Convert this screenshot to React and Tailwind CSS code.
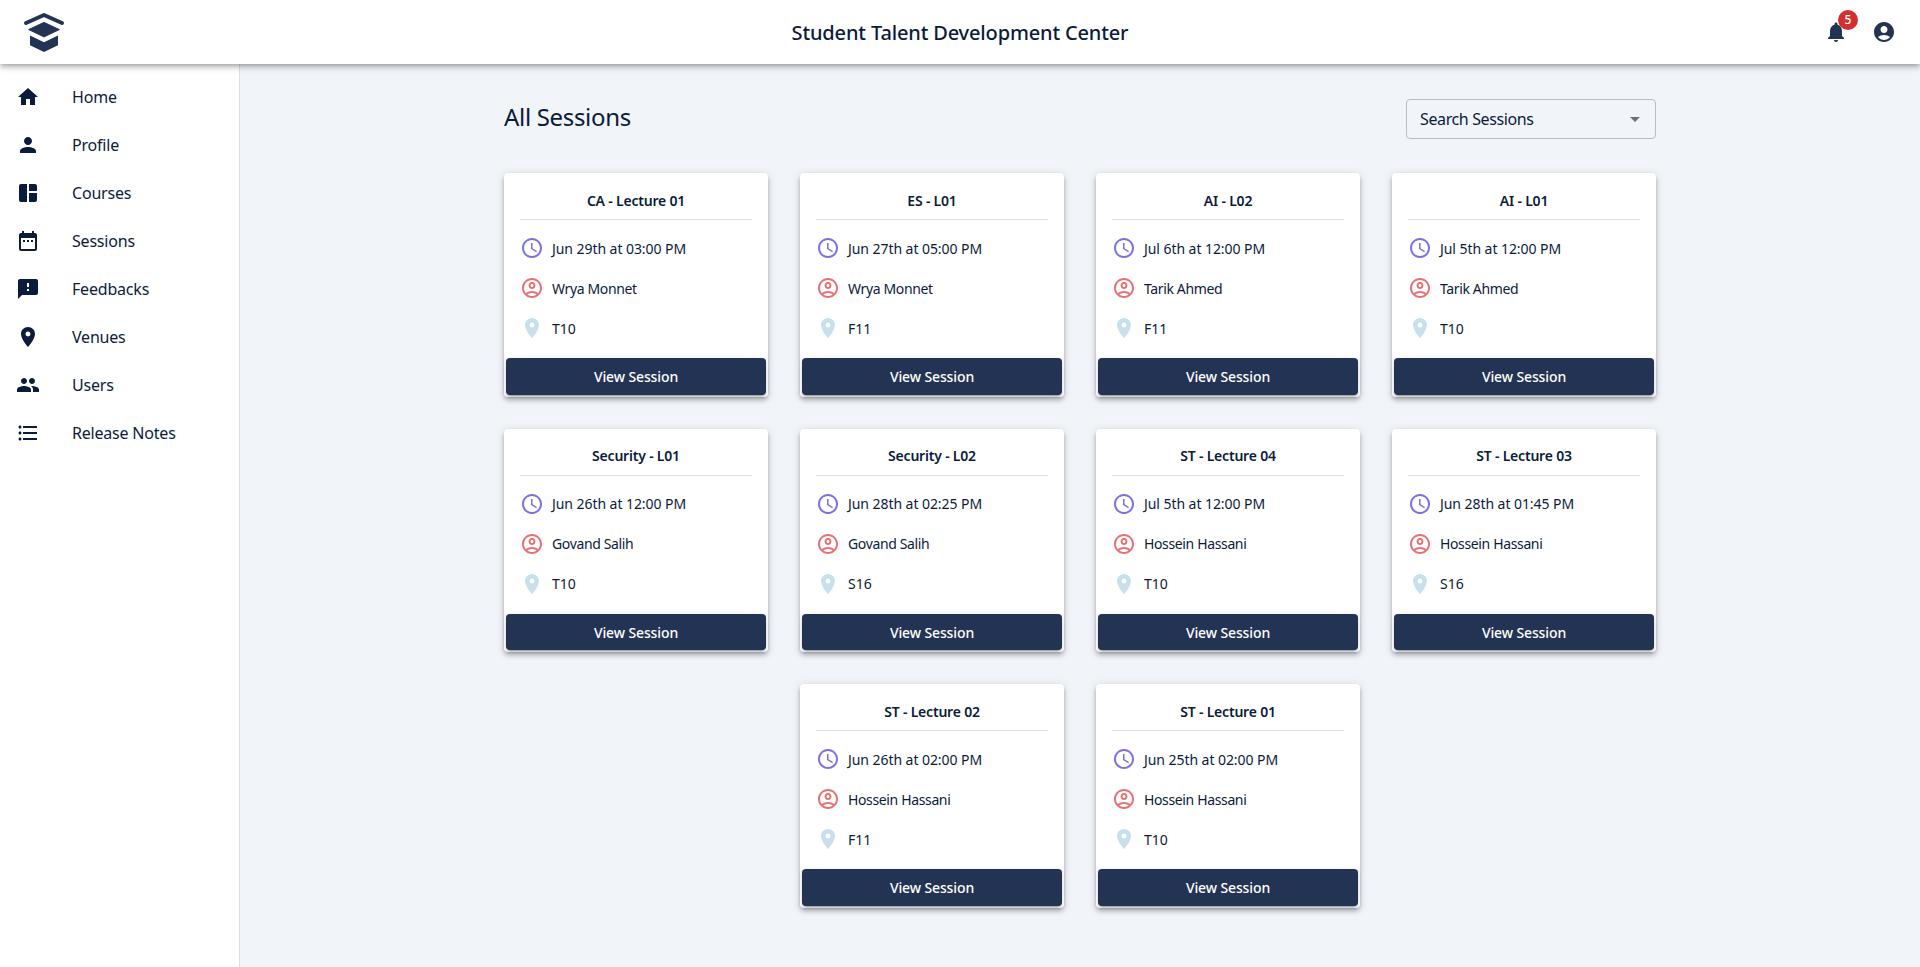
import React from "react";
import {
  MdHome, MdPerson, MdSpaceDashboard, MdDateRange, MdFeedback, MdLocationOn, MdPeople,
  MdFormatListBulleted, MdNotifications, MdAccountCircle, MdAccessTime, MdArrowDropDown,
} from "react-icons/md";

const nav = [
  ["Home", MdHome],
  ["Profile", MdPerson],
  ["Courses", MdSpaceDashboard],
  ["Sessions", MdDateRange],
  ["Feedbacks", MdFeedback],
  ["Venues", MdLocationOn],
  ["Users", MdPeople],
  ["Release Notes", MdFormatListBulleted],
];

const sessions = [
  ["CA - Lecture 01", "Jun 29th at 03:00 PM", "Wrya Monnet", "T10"],
  ["ES - L01", "Jun 27th at 05:00 PM", "Wrya Monnet", "F11"],
  ["AI - L02", "Jul 6th at 12:00 PM", "Tarik Ahmed", "F11"],
  ["AI - L01", "Jul 5th at 12:00 PM", "Tarik Ahmed", "T10"],
  ["Security - L01", "Jun 26th at 12:00 PM", "Govand Salih", "T10"],
  ["Security - L02", "Jun 28th at 02:25 PM", "Govand Salih", "S16"],
  ["ST - Lecture 04", "Jul 5th at 12:00 PM", "Hossein Hassani", "T10"],
  ["ST - Lecture 03", "Jun 28th at 01:45 PM", "Hossein Hassani", "S16"],
  ["ST - Lecture 02", "Jun 26th at 02:00 PM", "Hossein Hassani", "F11"],
  ["ST - Lecture 01", "Jun 25th at 02:00 PM", "Hossein Hassani", "T10"],
];

function Logo() {
  return (
    <svg viewBox="0 0 40 40" className="h-10 w-10 overflow-visible text-[#233353]" fill="currentColor">
      <path d="M2 11 20 3l18 8" fill="none" stroke="currentColor" strokeWidth="4" strokeLinecap="round" strokeLinejoin="round" />
      <path d="M4.500 17.600 20 10.300l15.500 7.300L20 25z" stroke="currentColor" strokeWidth=".8" strokeLinejoin="round" />
      <path d="M6 23.600l14 6.600 14-6.600v9.600L20 40 6 33.200z" />
    </svg>
  );
}

function PersonCircle() {
  return (
    <svg viewBox="0 0 24 24" className="h-6 w-6 text-[#e57373]" fill="currentColor">
      <path d="M12 2C6.480 2 2 6.480 2 12s4.480 10 10 10 10-4.480 10-10S17.520 2 12 2zM7.350 18.500C8.660 17.560 10.260 17 12 17s3.340.560 4.650 1.500C15.340 19.440 13.740 20 12 20s-3.340-.560-4.650-1.500zm10.790-1.380C16.450 15.800 14.320 15 12 15s-4.450.800-6.140 2.120C4.700 15.730 4 13.950 4 12c0-4.420 3.580-8 8-8s8 3.580 8 8c0 1.950-.700 3.730-1.860 5.120z" />
      <path d="M12 6c-1.930 0-3.500 1.570-3.500 3.500S10.070 13 12 13s3.500-1.570 3.500-3.500S13.930 6 12 6zm0 5c-.830 0-1.500-.670-1.500-1.500S11.170 8 12 8s1.500.670 1.500 1.500S12.830 11 12 11z" />
    </svg>
  );
}

function SessionCard({ title, time, lecturer, venue }) {
  return (
    <article className="flex h-[223.5px] w-[264px] flex-col rounded bg-white shadow-[0_2px_4px_-1px_rgba(0,0,0,0.2),0_4px_5px_0_rgba(0,0,0,0.14),0_1px_10px_0_rgba(0,0,0,0.12)]">
      <h2 className="mx-4 flex h-[47px] items-end justify-center border-b border-[#dedfe1] pb-[7.25px] text-sm leading-[22px] font-semibold tracking-[-0.2px]">
        {title}
      </h2>
      <div className="flex flex-col gap-4 px-4 pt-4 text-sm">
        <div className="flex h-6 items-center gap-2">
          <MdAccessTime className="h-6 w-6 text-[#7b70e8]" />
          <span className="pt-[1.5px] tracking-[-0.06px]">{time}</span>
        </div>
        <div className="flex h-6 items-center gap-2">
          <PersonCircle />
          <span className="pt-[1.5px] tracking-[-0.36px]">{lecturer}</span>
        </div>
        <div className="flex h-6 items-center gap-2">
          <MdLocationOn className="h-6 w-6 text-[#c8dff0]" />
          <span className="pt-[1.5px]">{venue}</span>
        </div>
      </div>
      <button className="mx-0.5 mt-auto mb-0.5 h-[36.5px] rounded bg-[#233353] pt-[1.5px] text-sm font-medium tracking-[-0.12px] text-white shadow-[0_3px_1px_-2px_rgba(0,0,0,0.2),0_2px_2px_0_rgba(0,0,0,0.14),0_1px_5px_0_rgba(0,0,0,0.12)]">
        View Session
      </button>
    </article>
  );
}

export default function App() {
  return (
    <div className="flex h-[967px] w-full flex-col overflow-hidden bg-[#f1f5fa] font-['Noto_Sans',sans-serif] text-[#0b1b3b]">
      <header className="relative z-10 grid h-16 shrink-0 grid-cols-3 items-center bg-white px-6 shadow-[0_2px_4px_-1px_rgba(0,0,0,0.2),0_4px_5px_0_rgba(0,0,0,0.14),0_1px_10px_0_rgba(0,0,0,0.12)]">
        <Logo />
        <h1 className="pt-0.5 text-center text-xl font-medium tracking-[-0.15px] whitespace-nowrap">Student Talent Development Center</h1>
        <div className="flex items-center justify-end gap-6 text-[#233353]">
          <div className="relative">
            <MdNotifications className="h-6 w-6" />
            <span className="absolute -top-2.5 left-3.5 flex h-5 w-5 items-center justify-center rounded-full bg-[#d32f2f] text-xs font-medium text-white">5</span>
          </div>
          <MdAccountCircle className="h-6 w-6" />
        </div>
      </header>
      <div className="flex min-h-0 flex-1">
        <nav className="w-60 shrink-0 border-r border-[#dedfe1] bg-white pt-[9px]">
          {nav.map(([label, Icon]) => (
            <a key={label} className="flex h-12 items-center gap-8 pl-4">
              <Icon className="h-6 w-6" />
              <span className="text-base tracking-[-0.2px]">{label}</span>
            </a>
          ))}
        </nav>
        <main className="flex flex-1 flex-col items-center pt-[35px]">
          <div className="flex h-10 w-[1152px] items-center justify-between">
            <h2 className="pb-[5px] text-2xl tracking-[-0.32px]">All Sessions</h2>
            <div className="flex h-10 w-[250px] items-center justify-between rounded border border-[#b9bdc1] pr-2 pl-[13px]">
              <span className="text-base tracking-[-0.38px]">Search Sessions</span>
              <MdArrowDropDown className="h-6 w-6 text-[#6e7073]" />
            </div>
          </div>
          <section className="mt-[34px] flex w-[1152px] flex-wrap justify-center gap-8">
            {sessions.map(([title, time, lecturer, venue]) => (
              <SessionCard key={title} title={title} time={time} lecturer={lecturer} venue={venue} />
            ))}
          </section>
        </main>
      </div>
    </div>
  );
}
